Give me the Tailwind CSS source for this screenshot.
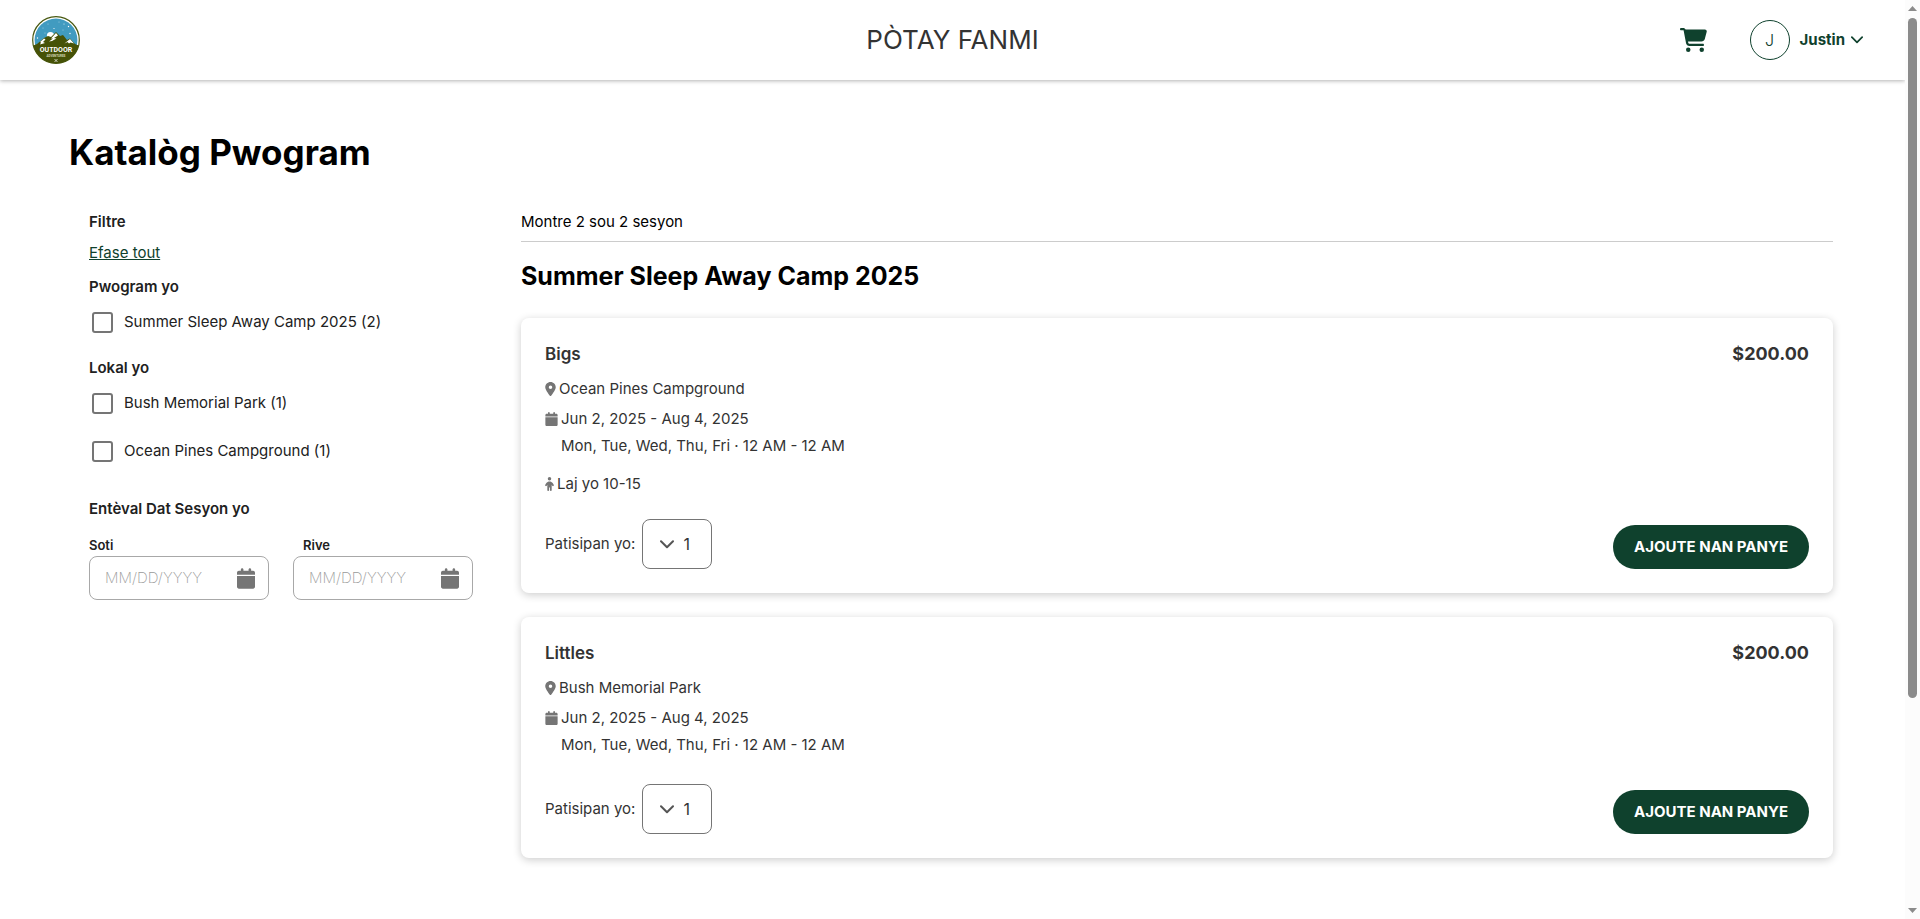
<!DOCTYPE html>
<html lang="ht">
 <head>
  <meta charset="utf-8"/>
  <meta content="width=device-width, initial-scale=1.0" name="viewport"/>
  <title>Katalòg Pwogram</title>
  <script src="https://cdn.jsdelivr.net/npm/@tailwindcss/browser@4"></script>
 </head>
 <body class="flex min-h-screen bg-white font-['Inter',sans-serif] text-[15px] leading-5 text-[#212121]">
  <!-- Shared icons -->
  <svg class="hidden">
   <symbol id="icon-pin" viewBox="0 0 384 512"><path d="M215.7 499.2C267 435 384 279.4 384 192C384 86 298 0 192 0S0 86 0 192c0 87.4 117 243 168.3 307.2c12.3 15.3 35.1 15.3 47.4 0zM192 128a64 64 0 1 1 0 128 64 64 0 1 1 0-128z"/></symbol>
   <symbol id="icon-calendar" viewBox="0 0 448 512"><path d="M96 32V64H48C21.5 64 0 85.5 0 112v48H448V112c0-26.5-21.5-48-48-48H352V32c0-17.7-14.3-32-32-32s-32 14.3-32 32V64H160V32c0-17.7-14.3-32-32-32S96 14.3 96 32zM448 192H0V464c0 26.5 21.5 48 48 48H400c26.5 0 48-21.5 48-48V192z"/></symbol>
   <symbol id="icon-child" viewBox="0 0 320 512"><path d="M96 64a64 64 0 1 1 128 0A64 64 0 1 1 96 64zm48 320v96c0 17.7-14.3 32-32 32s-32-14.3-32-32V287.8L59.1 321c-9.4 15-29.2 19.4-44.1 10S-4.5 301.9 4.9 287l39.9-63.3C69.7 184 113.2 160 160 160s90.3 24 115.2 63.6L315.1 287c9.4 15 4.9 34.7-10 44.1s-34.7 4.9-44.1-10L240 287.8V480c0 17.7-14.3 32-32 32s-32-14.3-32-32V384H144z"/></symbol>
   <symbol id="icon-chevron" viewBox="0 0 14 9"><path d="M1 1.2l6 6 6-6" fill="none" stroke="currentColor" stroke-width="2" stroke-linecap="round" stroke-linejoin="round"/></symbol>
  </svg>

  <div class="min-w-0 flex-1">
   <header class="grid h-20 grid-cols-3 items-center px-8 shadow-[0_1px_4px_rgba(0,0,0,0.3)]">
    <a href="#" aria-label="Outdoor Adventures" class="justify-self-start">
     <svg class="size-12" viewBox="0 0 48 48">
      <defs><clipPath id="disc"><circle cx="24" cy="24" r="23.5"/></clipPath></defs>
      <circle cx="24" cy="24" r="23.3" fill="#fff" stroke="#4a5a12" stroke-width="1.2"/>
      <circle cx="24" cy="24" r="21.4" fill="#419bc0"/>
      <g clip-path="url(#disc)">
       <circle cx="18.5" cy="19.5" r="3.6" fill="#fff"/>
       <path d="M0 30L5 28L12 22L16 20L19 21L24 16L28 20L31 19L35 24L38 22.5L43 28L48 30V48H0z" fill="#465207"/>
       <path d="M12 22.5L13.5 23.5L11 26L13 27L8 28.5L9 26.5L8 26zM24 17L26 19.5L22 22L24.5 22.5L20 25L17 25.5L21 22.5L19 22.5zM38 23L42 27.5L38.5 26.5L37 27.5L35.5 26L32.5 27.5z" fill="#fff"/>
      </g>
      <g fill="#fff">
       <circle cx="16" cy="8" r=".4"/><circle cx="27" cy="6" r=".4"/><circle cx="32" cy="8" r=".5"/><circle cx="36.5" cy="10.5" r=".7"/><circle cx="11" cy="12" r=".4"/><circle cx="22" cy="12.5" r=".6"/><circle cx="38" cy="17.5" r=".7"/><circle cx="5.5" cy="22" r=".7"/><circle cx="13" cy="17" r=".4"/><circle cx="31" cy="14" r=".4"/>
      </g>
      <text x="24" y="36" text-anchor="middle" fill="#fff" font-family="Roboto" font-weight="700" font-size="7">OUTDOOR</text>
      <text x="24" y="41" text-anchor="middle" fill="#d5d8b8" font-family="Roboto" font-weight="700" font-size="3">ADVENTURES</text>
      <path d="M22.5 43l3 3M25.5 43l-3 3" stroke="#fff" stroke-width=".7"/>
     </svg>
    </a>
    <p class="justify-self-center text-[26px] leading-8 text-[#333]">PÒTAY FANMI</p>
    <div class="flex items-center justify-self-end pr-2.5 text-[#0f412d]">
     <a href="#" aria-label="Panye" class="mr-[43px]">
      <svg class="h-6 w-[27px]" viewBox="0 0 576 512" fill="currentColor"><path d="M0 24C0 10.7 10.7 0 24 0H69.5c22 0 41.5 12.8 50.6 32h411c26.3 0 45.5 25 38.6 50.4l-41 152.3c-8.5 31.4-37 53.3-69.5 53.3H170.7l5.4 28.5c2.2 11.3 12.1 19.5 23.6 19.5H488c13.3 0 24 10.7 24 24s-10.7 24-24 24H199.7c-34.6 0-64.3-24.6-70.7-58.5L77.4 54.5c-.7-3.8-4-6.5-7.9-6.5H24C10.7 48 0 37.3 0 24zM128 464a48 48 0 1 1 96 0 48 48 0 1 1 -96 0zm336-48a48 48 0 1 1 0 96 48 48 0 1 1 0-96z"/></svg>
     </a>
     <button type="button" class="flex items-center">
      <span class="mr-2.5 flex size-10 items-center justify-center rounded-full border border-[#0f412d] text-base font-light">J</span>
      <span class="mr-1.5 font-bold">Justin</span>
      <svg class="h-2 w-3"><use href="#icon-chevron"/></svg>
     </button>
    </div>
   </header>

   <main class="pt-13 pr-[72px] pb-10 pl-[69px]">
    <h1 class="text-[35px] leading-10 font-bold text-black">Katalòg Pwogram</h1>

    <div class="mt-10 flex gap-12">
     <aside class="shrink-0 pl-5">
      <h2 class="font-semibold">Filtre</h2>
      <a href="#" class="mt-[11px] inline-block text-[#0f412d] underline">Efase tout</a>

      <h3 class="mt-3.5 font-semibold">Pwogram yo</h3>
      <label class="mt-px flex h-12 items-center gap-[11px] pl-[3px]">
       <input type="checkbox" class="size-[21px] appearance-none rounded-[3px] border-2 border-[#757575]"/>
       Summer Sleep Away Camp 2025 (2)
      </label>

      <h3 class="mt-3 font-semibold">Lokal yo</h3>
      <label class="mt-px flex h-12 items-center gap-[11px] pl-[3px]">
       <input type="checkbox" class="size-[21px] appearance-none rounded-[3px] border-2 border-[#757575]"/>
       Bush Memorial Park (1)
      </label>
      <label class="flex h-12 items-center gap-[11px] pl-[3px]">
       <input type="checkbox" class="size-[21px] appearance-none rounded-[3px] border-2 border-[#757575]"/>
       Ocean Pines Campground (1)
      </label>

      <h3 class="mt-6 font-semibold">Entèval Dat Sesyon yo</h3>
      <div class="mt-[18px] flex gap-6">
       <div class="w-[180px]">
        <label for="soti" class="block text-[13px] leading-4 font-semibold">Soti</label>
        <div class="mt-[3px] flex h-11 items-center rounded-lg border border-[#a8a8a8] pr-[13px] pl-[15px]">
         <input id="soti" type="text" placeholder="MM/DD/YYYY" class="w-full min-w-0 font-extralight outline-none placeholder:text-[#9a9a9a]"/>
         <svg class="h-[21px] w-[18px] shrink-0 text-[#757575]" fill="currentColor"><use href="#icon-calendar"/></svg>
        </div>
       </div>
       <div class="w-[180px]">
        <label for="rive" class="block pl-2.5 text-[13px] leading-4 font-semibold">Rive</label>
        <div class="mt-[3px] flex h-11 items-center rounded-lg border border-[#a8a8a8] pr-[13px] pl-[15px]">
         <input id="rive" type="text" placeholder="MM/DD/YYYY" class="w-full min-w-0 font-extralight outline-none placeholder:text-[#9a9a9a]"/>
         <svg class="h-[21px] w-[18px] shrink-0 text-[#757575]" fill="currentColor"><use href="#icon-calendar"/></svg>
        </div>
       </div>
      </div>
     </aside>

     <section class="min-w-0 flex-1">
      <p class="border-b border-[#ccc] pb-[9px] text-black">Montre 2 sou 2 sesyon</p>
      <h2 class="mt-[18px] text-[25px] leading-8 font-bold text-black">Summer Sleep Away Camp 2025</h2>

      <div class="mt-[26px] flex flex-col gap-6 text-[#333]">
       <article class="rounded-lg bg-white p-6 shadow-[0_2px_8px_rgba(0,0,0,0.2)]">
        <div class="flex justify-between">
         <h3 class="text-[17px] leading-6 font-semibold">Bigs</h3>
         <p class="text-lg/6 font-bold">$200.00</p>
        </div>
        <p class="mt-[13px] flex items-center gap-[3px]"><svg class="h-3.5 w-[11px] text-[#757575]" fill="currentColor"><use href="#icon-pin"/></svg>Ocean Pines Campground</p>
        <p class="mt-2.5 flex items-center gap-[3px]"><svg class="h-3.5 w-[13px] text-[#757575]" fill="currentColor"><use href="#icon-calendar"/></svg>Jun 2, 2025 - Aug 4, 2025</p>
        <p class="mt-[7px] pl-4">Mon, Tue, Wed, Thu, Fri · 12 AM - 12 AM</p>
        <p class="mt-[18px] flex items-center gap-[3px]"><svg class="h-3.5 w-[9px] text-[#757575]" fill="currentColor"><use href="#icon-child"/></svg>Laj yo 10-15</p>
        <div class="mt-[25px] flex items-end justify-between">
         <div class="flex items-center gap-[7px]">
          <label for="patisipan-bigs">Patisipan yo:</label>
          <div class="relative">
           <select id="patisipan-bigs" class="h-[50px] w-[70px] appearance-none rounded-lg border border-[#757575] bg-white pl-10 text-base">
            <option>1</option>
            <option>2</option>
           </select>
           <svg class="pointer-events-none absolute top-[21px] left-[18px] h-[9px] w-3.5 text-[#555]"><use href="#icon-chevron"/></svg>
          </div>
         </div>
         <button type="button" class="h-11 rounded-full bg-[#0f412d] px-[21px] font-bold text-white hover:bg-[#0b3323]">AJOUTE NAN PANYE</button>
        </div>
       </article>

       <article class="rounded-lg bg-white p-6 shadow-[0_2px_8px_rgba(0,0,0,0.2)]">
        <div class="flex justify-between">
         <h3 class="text-[17px] leading-6 font-semibold">Littles</h3>
         <p class="text-lg/6 font-bold">$200.00</p>
        </div>
        <p class="mt-[13px] flex items-center gap-[3px]"><svg class="h-3.5 w-[11px] text-[#757575]" fill="currentColor"><use href="#icon-pin"/></svg>Bush Memorial Park</p>
        <p class="mt-2.5 flex items-center gap-[3px]"><svg class="h-3.5 w-[13px] text-[#757575]" fill="currentColor"><use href="#icon-calendar"/></svg>Jun 2, 2025 - Aug 4, 2025</p>
        <p class="mt-[7px] pl-4">Mon, Tue, Wed, Thu, Fri · 12 AM - 12 AM</p>
        <div class="mt-[29px] flex items-end justify-between">
         <div class="flex items-center gap-[7px]">
          <label for="patisipan-littles">Patisipan yo:</label>
          <div class="relative">
           <select id="patisipan-littles" class="h-[50px] w-[70px] appearance-none rounded-lg border border-[#757575] bg-white pl-10 text-base">
            <option>1</option>
            <option>2</option>
           </select>
           <svg class="pointer-events-none absolute top-[21px] left-[18px] h-[9px] w-3.5 text-[#555]"><use href="#icon-chevron"/></svg>
          </div>
         </div>
         <button type="button" class="h-11 rounded-full bg-[#0f412d] px-[21px] font-bold text-white hover:bg-[#0b3323]">AJOUTE NAN PANYE</button>
        </div>
       </article>
      </div>
     </section>
    </div>
   </main>
  </div>

  <!-- Scroll rail -->
  <div class="sticky top-0 flex h-screen w-[15px] shrink-0 flex-col items-center bg-[#fcfcfc] py-[6px] text-[#8b8b8b]" aria-hidden="true">
   <svg class="h-[5px] w-[9px]" viewBox="0 0 9 5" fill="currentColor"><path d="M0 5L4.5 0L9 5z"/></svg>
   <div class="my-[7px] flex w-[9px] flex-1 flex-col">
    <div class="h-[77%] rounded-full bg-[#8b8b8b]"></div>
   </div>
   <svg class="h-[5px] w-[9px]" viewBox="0 0 9 5" fill="currentColor"><path d="M0 0L4.5 5L9 0z"/></svg>
  </div>
 </body>
</html>
